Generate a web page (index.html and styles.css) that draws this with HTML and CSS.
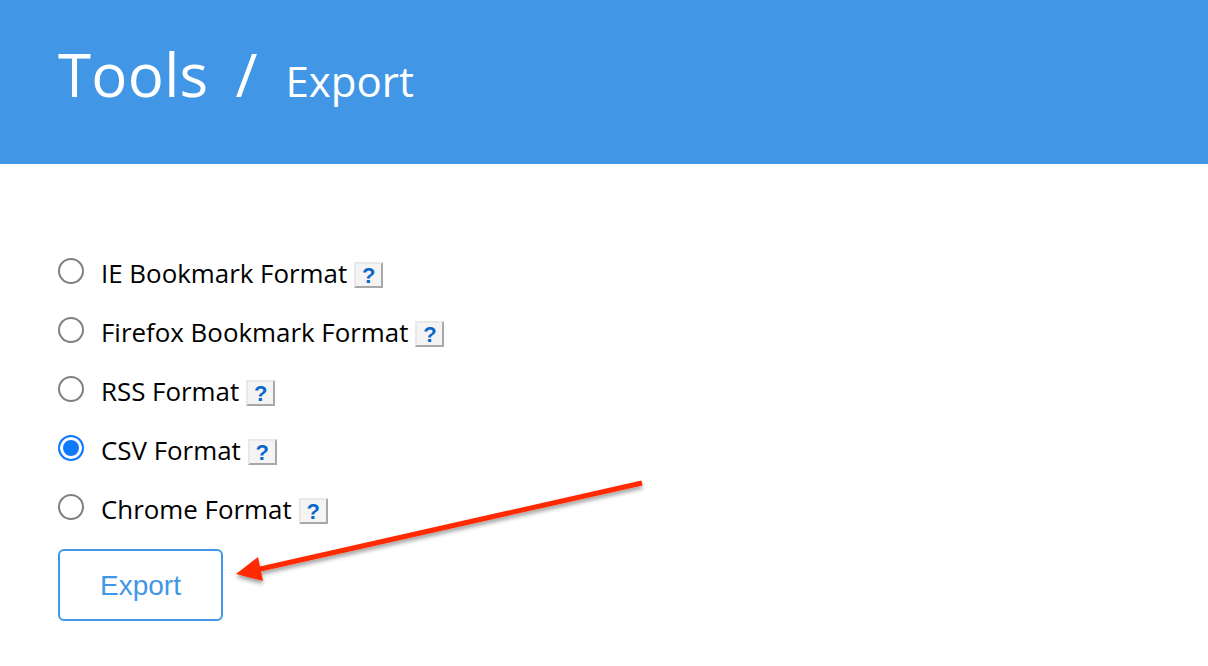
FILE: index.html
```html
<!DOCTYPE html>
<html lang="en">
<head>
  <meta charset="UTF-8">
  <title>Tools / Export</title>
  <link rel="stylesheet" href="styles.css">
</head>
<body>

  <!-- Page header -->
  <header class="page-header">
    <h1>Tools</h1>
    <span class="slash">/</span>
    <h2>Export</h2>
  </header>

  <!-- Export form -->
  <form class="export-form">
    <label class="format-row">
      <input type="radio" name="format">
      <span>IE Bookmark Format</span>
      <a class="help">?</a>
    </label>
    <label class="format-row">
      <input type="radio" name="format">
      <span>Firefox Bookmark Format</span>
      <a class="help">?</a>
    </label>
    <label class="format-row">
      <input type="radio" name="format">
      <span>RSS Format</span>
      <a class="help">?</a>
    </label>
    <label class="format-row">
      <input type="radio" name="format" checked>
      <span>CSV Format</span>
      <a class="help">?</a>
    </label>
    <label class="format-row">
      <input type="radio" name="format">
      <span>Chrome Format</span>
      <a class="help">?</a>
    </label>
    <button type="button" class="export-btn">Export</button>
  </form>

  <!-- Annotation arrow -->
  <svg class="arrow" width="1208" height="666" viewBox="0 0 1208 666">
    <defs>
      <filter id="arrow-shadow" x="-10%" y="-30%" width="120%" height="170%">
        <feDropShadow dx="0" dy="3" stdDeviation="2" flood-color="#000" flood-opacity="0.4"/>
      </filter>
    </defs>
    <g filter="url(#arrow-shadow)">
      <path d="M642 483 L256 570" stroke="#ff2a00" stroke-width="5" fill="none"/>
      <path d="M236 574 L258 557 L263 581 Z" fill="#ff2a00"/>
    </g>
  </svg>

</body>
</html>
```

FILE: styles.css
```css
* { box-sizing: border-box; }

body {
  font-family: "Open Sans", sans-serif;
  background-color: #fff;
  color: #000;
  margin: 0;
  overflow: hidden;
}

/* Header */
.page-header {
  display: flex;
  align-items: baseline;
  height: 164px;
  padding: 32px 58px 0;
  background-color: #4197e5;
  color: #fff;
}

.page-header h1 {
  margin: 0;
  font-size: 60px;
  font-weight: 400;
  line-height: 84px;
  letter-spacing: 0.3px;
}

.slash {
  margin: 0 28px 0 27px;
  font-size: 60px;
  line-height: 82px;
}

.page-header h2 {
  margin: 0;
  font-size: 42px;
  font-weight: 400;
  line-height: 54px;
}

/* Form */
.export-form {
  display: flex;
  flex-direction: column;
  align-items: flex-start;
  padding: 79px 58px 0;
}

.format-row {
  display: flex;
  align-items: center;
  height: 59px;
  font-size: 25.9px;
}

.format-row input {
  width: 26px;
  height: 26px;
  margin: 0 17px 4px 0;
  appearance: none;
  border: 2px solid #808080;
  border-radius: 50%;
  background-color: #fff;
}

.format-row input:checked {
  border-color: #0f7afb;
  background-color: #0f7afb;
  box-shadow: inset 0 0 0 3px #fff;
}

.help {
  display: block;
  width: 29px;
  height: 26px;
  margin: 4px 0 0 7px;
  background-color: #f4f4f4;
  border: 2px solid;
  border-color: #e8e8e8 #a8a8a8 #a8a8a8 #e8e8e8;
  color: #0a66cc;
  font-family: "Liberation Sans", Arial, sans-serif;
  font-size: 22px;
  font-weight: bold;
  line-height: 23px;
  text-align: center;
}

.export-btn {
  width: 165px;
  height: 72px;
  margin-top: 11px;
  padding-top: 3px;
  background-color: #fff;
  border: 2px solid #4197e5;
  border-radius: 6px;
  color: #4197e5;
  font-family: "Liberation Sans", Arial, sans-serif;
  font-size: 28px;
}

/* Annotation */
.arrow {
  position: absolute;
  top: 0;
  left: 0;
  pointer-events: none;
}
```
